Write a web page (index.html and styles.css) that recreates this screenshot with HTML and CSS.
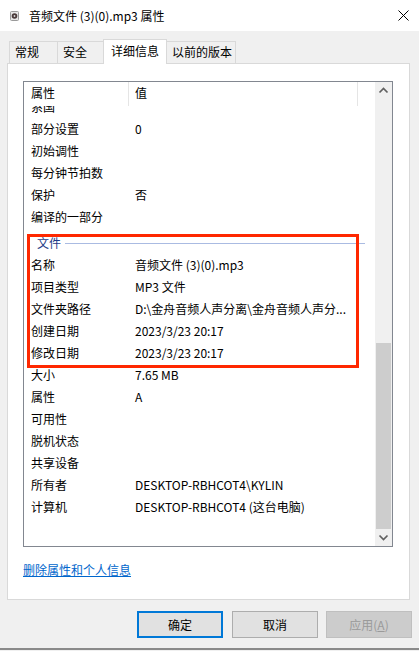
FILE: index.html
```html
<!DOCTYPE html>
<html lang="zh-CN">
<head>
<meta charset="utf-8">
<title>音频文件 (3)(0).mp3 属性</title>
<link rel="stylesheet" href="styles.css">
</head>
<body>
<div class="window">
  <div class="titlebar">
    <svg class="app-icon" width="9" height="10" viewBox="0 0 9 10">
      <rect x="0.5" y="0.5" width="8" height="9" rx="1" fill="#e6e6e6" stroke="#9a9a9a"/>
      <circle cx="4.5" cy="5" r="2.8" fill="#4a3a3a"/>
      <circle cx="4.5" cy="5" r="0.9" fill="#d8d8d8"/>
    </svg>
    <span class="title">音频文件 (3)(0).mp3 属性</span>
    <svg class="close" width="11" height="11" viewBox="0 0 11 11">
      <path d="M0.5 0.5 L10.5 10.5 M10.5 0.5 L0.5 10.5" stroke="#000" stroke-width="1" fill="none"/>
    </svg>
  </div>

  <div class="tabs">
    <div class="tab t1">常规</div>
    <div class="tab t2">安全</div>
    <div class="tab t3 active">详细信息</div>
    <div class="tab t4">以前的版本</div>
  </div>

  <div class="panel">
    <div class="listbox">
      <div class="listcontent">
        <div class="lheader">
          <div class="hcell c1">属性</div>
          <div class="hcell c2">值</div>
        </div>
        <div class="lbody">
          <div class="row first"><div class="c1">系国</div><div class="c2"></div></div>
          <div class="row"><div class="c1">部分设置</div><div class="c2">0</div></div>
          <div class="row"><div class="c1">初始调性</div><div class="c2"></div></div>
          <div class="row"><div class="c1">每分钟节拍数</div><div class="c2"></div></div>
          <div class="row"><div class="c1">保护</div><div class="c2">否</div></div>
          <div class="row"><div class="c1">编译的一部分</div><div class="c2"></div></div>
          <div class="group"><span class="gname">文件</span><span class="gline"></span></div>
          <div class="row"><div class="c1">名称</div><div class="c2">音频文件 (3)(0).mp3</div></div>
          <div class="row"><div class="c1">项目类型</div><div class="c2">MP3 文件</div></div>
          <div class="row"><div class="c1">文件夹路径</div><div class="c2">D:\金舟音频人声分离\金舟音频人声分...</div></div>
          <div class="row"><div class="c1">创建日期</div><div class="c2">2023/3/23 20:17</div></div>
          <div class="row"><div class="c1">修改日期</div><div class="c2">2023/3/23 20:17</div></div>
          <div class="row"><div class="c1">大小</div><div class="c2">7.65 MB</div></div>
          <div class="row"><div class="c1">属性</div><div class="c2">A</div></div>
          <div class="row"><div class="c1">可用性</div><div class="c2"></div></div>
          <div class="row"><div class="c1">脱机状态</div><div class="c2"></div></div>
          <div class="row"><div class="c1">共享设备</div><div class="c2"></div></div>
          <div class="row"><div class="c1">所有者</div><div class="c2">DESKTOP-RBHCOT4\KYLIN</div></div>
          <div class="row"><div class="c1">计算机</div><div class="c2">DESKTOP-RBHCOT4 (这台电脑)</div></div>
        </div>
      </div>
      <div class="vscroll">
        <div class="sbtn">
          <svg width="17" height="17" viewBox="0 0 17 17"><polyline points="4.5,10.5 8.5,6.5 12.5,10.5" fill="none" stroke="#606060" stroke-width="1.7"/></svg>
        </div>
        <div class="track"><div class="thumb"></div></div>
        <div class="sbtn">
          <svg width="17" height="17" viewBox="0 0 17 17"><polyline points="4.5,6.5 8.5,10.5 12.5,6.5" fill="none" stroke="#606060" stroke-width="1.7"/></svg>
        </div>
      </div>
    </div>
    <a class="link" href="#">删除属性和个人信息</a>
  </div>

  <div class="buttons">
    <div class="btn default b1">确定</div>
    <div class="btn b2">取消</div>
    <div class="btn disabled b3">应用(<u>A</u>)</div>
  </div>
  <div class="bottom-edge"></div>

  <div class="highlight"></div>
</div>
</body>
</html>
```

FILE: styles.css
```css
html, body {
  margin: 0;
  padding: 0;
}

body {
  width: 419px;
  height: 651px;
  overflow: hidden;
  background: #f0f0f0;
  font-family: "Noto Sans CJK SC", "Noto Sans", sans-serif;
  font-size: 12px;
  color: #000;
}

.window {
  position: relative;
  width: 419px;
  height: 651px;
  display: flex;
  flex-direction: column;
}

/* title bar */
.titlebar {
  height: 31px;
  background: #fff;
  display: flex;
  align-items: center;
  flex: none;
}
.app-icon {
  margin-left: 10px;
  flex: none;
}
.title {
  margin-left: 10px;
  line-height: 16px;
}
.close {
  margin-left: auto;
  margin-right: 10px;
}

/* tabs */
.tabs {
  height: 33px;
  margin-bottom: -1px;
  padding-left: 9px;
  display: flex;
  align-items: flex-end;
  position: relative;
  z-index: 2;
  flex: none;
}
.tab {
  box-sizing: border-box;
  height: 22px;
  margin-bottom: 1px;
  margin-right: -1px;
  border: 1px solid #d9d9d9;
  border-bottom: none;
  background: #f0f0f0;
  line-height: 20px;
  padding-left: 5px;
  white-space: nowrap;
}
.t1 { width: 49px; }
.t2 { width: 47px; }
.t3 { width: 64px; padding-left: 7px; }
.t4 { width: 70px; padding-left: 5px; }
.tab.active {
  height: 25px;
  margin-bottom: 0;
  background: #fff;
  position: relative;
  z-index: 3;
  line-height: 22px;
}

/* panel */
.panel {
  box-sizing: border-box;
  margin-left: 7px;
  width: 403px;
  height: 537px;
  border: 1px solid #d9d9d9;
  background: #fff;
  flex: none;
  display: flex;
  flex-direction: column;
  position: relative;
  z-index: 1;
}

.listbox {
  box-sizing: border-box;
  margin-top: 17px;
  margin-left: 15px;
  width: 370px;
  height: 466px;
  border: 1px solid #828790;
  display: flex;
  background: #fff;
}

.listcontent {
  flex: 1;
  min-width: 0;
  display: flex;
  flex-direction: column;
  overflow: hidden;
}

.lheader {
  flex: none;
  height: 24px;
  display: grid;
  grid-template-columns: 105px 229px;
}
.hcell {
  box-sizing: border-box;
  border-right: 1px solid #e5e5e5;
  line-height: 22px;
  white-space: nowrap;
}
.hcell.c1 { padding-left: 7px; }
.hcell.c2 { padding-left: 6px; }

.lbody {
  flex: 1;
  overflow: hidden;
}

.row {
  height: 22px;
  display: grid;
  grid-template-columns: 105px 229px;
  line-height: 22px;
  white-space: nowrap;
}
.row.first {
  margin-top: -10px;
}
.row .c1 {
  padding-left: 7px;
  overflow: hidden;
}
.row .c2 {
  padding-left: 6px;
  overflow: hidden;
}

.group {
  box-sizing: border-box;
  height: 26px;
  padding-top: 4px;
  padding-left: 13px;
  padding-right: 10px;
  display: flex;
  align-items: center;
}
.gname {
  color: #1e3c87;
  line-height: 16px;
}
.gline {
  flex: 1;
  height: 1px;
  margin-left: 4px;
  background: #aabbe2;
}

/* scrollbar */
.vscroll {
  width: 17px;
  flex: none;
  background: #f0f0f0;
  display: flex;
  flex-direction: column;
}
.sbtn {
  height: 17px;
  flex: none;
}
.sbtn svg {
  display: block;
}
.track {
  flex: 1;
  display: flex;
  flex-direction: column;
  justify-content: flex-end;
}
.thumb {
  height: 186px;
  margin: 0 1px;
  background: #cdcdcd;
}

/* link */
.link {
  margin-top: 15px;
  margin-left: 15px;
  align-self: flex-start;
  color: #0066cc;
  text-decoration: underline;
  line-height: 16px;
}

/* buttons */
.buttons {
  flex: none;
  margin-top: 11px;
  display: flex;
}
.btn {
  box-sizing: border-box;
  width: 86px;
  height: 27px;
  background: #e1e1e1;
  border: 1px solid #adadad;
  display: flex;
  align-items: center;
  justify-content: center;
  line-height: 16px;
}
.btn.default {
  border: 2px solid #0078d7;
}
.b1 { margin-left: 137px; }
.b2 { margin-left: 9px; }
.b3 { margin-left: 8px; }
.btn.disabled {
  background: #cccccc;
  border-color: #bfbfbf;
  color: #9a9a9a;
}

.bottom-edge {
  margin-top: 10px;
  height: 2px;
  background: #8a8a8a;
  flex: none;
}

/* red annotation rectangle drawn over the list */
.highlight {
  position: absolute;
  left: 27px;
  top: 234px;
  width: 332px;
  height: 134px;
  box-sizing: border-box;
  border: 3px solid #ff2800;
  z-index: 5;
  pointer-events: none;
}
```
